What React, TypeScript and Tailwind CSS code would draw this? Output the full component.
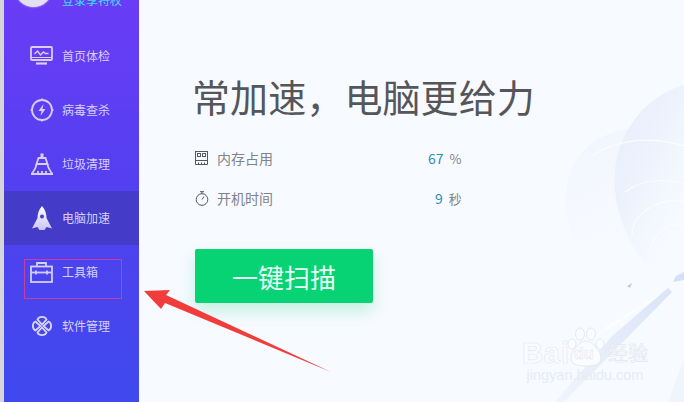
const font = "font-['Noto_Sans_CJK_SC','Noto_Sans',sans-serif]";

function MonitorIcon() {
  return (
    <svg width="23" height="19" viewBox="0 0 23 19" fill="none" stroke="#d9cdfb" strokeWidth="1.8">
      <rect x="1" y="1" width="21" height="13" rx="1" />
      <path d="M4.500 8l3-3 3 4 3-3 2 1.500h3" strokeWidth="1.400" />
      <path d="M1 11.500h21" strokeWidth="1" />
      <path d="M6 17.500h11" strokeWidth="2.200" />
    </svg>
  );
}

function ShieldIcon() {
  return (
    <svg width="24" height="24" viewBox="0 0 24 24" fill="none" stroke="#d9cdfb" strokeWidth="1.800">
      <circle cx="12" cy="12" r="10" />
      <path d="M12 0.500v2.500M12 21v2.500M0.500 12H3M21 12h2.500" strokeWidth="1.600" />
      <path d="M13.500 6l-5 7h3l-1 5 5-7h-3z" fill="#d9cdfb" stroke="none" />
    </svg>
  );
}

function BroomIcon() {
  return (
    <svg width="22" height="22" viewBox="0 0 22 22" fill="none" stroke="#d9cdfb" strokeWidth="1.800">
      <path d="M9.500 0.500h3v4h-3z" fill="#d9cdfb" stroke="none" />
      <path d="M7.500 5h7l2 6h-11z" />
      <path d="M5.500 11C5 15 3 18 0.500 21h21C19 18 17 15 16.500 11" />
      <path d="M7 21v-3M11 21v-3M15 21v-3" />
    </svg>
  );
}

function RocketIcon() {
  return (
    <svg width="22" height="25" viewBox="0 0 22 25">
      <defs>
        <linearGradient id="rk" x1="0" y1="0" x2="0" y2="1">
          <stop offset="0" stopColor="#ffffff" />
          <stop offset="1" stopColor="#c9c5f7" />
        </linearGradient>
      </defs>
      <path
        d="M11 0C7.500 4 6.500 8 6.500 12L1 22.500l5.500-1.500 2 3h5l2-3 5.500 1.500L15.500 12C15.500 8 14.500 4 11 0z"
        fill="url(#rk)"
      />
      <circle cx="11" cy="10.500" r="2" fill="#4a3fc9" />
    </svg>
  );
}

function ToolboxIcon() {
  return (
    <svg width="23" height="21" viewBox="0 0 23 21" fill="none" stroke="#d3cffa" strokeWidth="1.800">
      <rect x="1" y="4.500" width="21" height="15.500" />
      <path d="M7 4.500V1h9v3.500" />
      <path d="M1 10.500h21" />
      <path d="M6 8.500v4M17 8.500v4" strokeWidth="1.800" />
    </svg>
  );
}

function AppsIcon() {
  return (
    <svg width="22" height="22" viewBox="0 0 22 22" fill="none" stroke="#d9d7fb" strokeWidth="1.800">
      <path d="M11 9.500L6.500 4.500C8 1 14 1 15.500 4.500z" />
      <path d="M11 12.500L6.500 17.500C8 21 14 21 15.500 17.500z" />
      <path d="M9.500 11L4.500 6.500C1 8 1 14 4.500 15.500z" />
      <path d="M12.500 11L17.500 6.500C21 8 21 14 17.500 15.500z" />
    </svg>
  );
}

function ChipIcon() {
  return (
    <svg width="13" height="14" viewBox="0 0 13 14" fill="none" stroke="#55585e" strokeWidth="1">
      <rect x="0.500" y="0.500" width="12" height="9" />
      <rect x="2.500" y="2.500" width="3" height="3" />
      <rect x="7.500" y="2.500" width="3" height="3" />
      <path d="M0.500 9.500v4h12v-4M3.500 13.500v-2M6.500 13.500v-2M9.500 13.500v-2" />
    </svg>
  );
}

function TimerIcon() {
  return (
    <svg width="14" height="15" viewBox="0 0 14 15" fill="none" stroke="#55585e" strokeWidth="1">
      <circle cx="7" cy="8.500" r="5.800" />
      <path d="M5 0.700h4M7 0.700v2M7 8.500l2-3" />
    </svg>
  );
}

const navItems = [
  { label: "首页体检", icon: <MonitorIcon />, h: "h-[55px]" },
  { label: "病毒查杀", icon: <ShieldIcon />, h: "h-[54px]" },
  { label: "垃圾清理", icon: <BroomIcon />, h: "h-[54px]" },
  { label: "电脑加速", icon: <RocketIcon />, h: "h-[54px]", active: true },
  { label: "工具箱", icon: <ToolboxIcon />, h: "h-[54px]" },
  { label: "软件管理", icon: <AppsIcon />, h: "h-[54px]" },
];

function Sidebar() {
  return (
    <aside className="flex h-full w-[135px] shrink-0 flex-col bg-gradient-to-b from-[#6a3cf6] via-[#5140ef] to-[#3e49ee]">
      <div className="flex h-[28px] overflow-hidden">
        <div className="ml-[11px] mt-[-30px] h-[37px] w-[37px] rounded-full bg-[#e4e0f4] shadow-[0_0_2px_#ffffff]" />
        <span className="ml-[10px] mt-[-8px] text-[12px] leading-[16px] text-[#35e0f5]">登录享特权</span>
      </div>
      {navItems.map((item) => (
        <div key={item.label} className={`flex items-center ${item.h} ${item.active ? "bg-[#443bc8]" : ""}`}>
          <div className="flex w-[58px] shrink-0 justify-center pl-[17px]">{item.icon}</div>
          <span className="text-[12px] leading-none text-[#d6d0fa]">{item.label}</span>
        </div>
      ))}
    </aside>
  );
}

function Backdrop() {
  return (
    <svg className="absolute inset-0" width="545" height="402" viewBox="139 0 545 402" fill="none">
      <defs>
        <linearGradient id="orb" x1="0" y1="0.100" x2="0.700" y2="1">
          <stop offset="0" stopColor="#e6edfb" />
          <stop offset="0.500" stopColor="#eef3fd" />
          <stop offset="1" stopColor="#f7faff" stopOpacity="0" />
        </linearGradient>
        <linearGradient id="halo" x1="0" y1="0" x2="0.300" y2="1">
          <stop offset="0" stopColor="#f0f4fd" />
          <stop offset="1" stopColor="#f7faff" stopOpacity="0" />
        </linearGradient>
        <linearGradient id="streak" x1="1" y1="0" x2="0" y2="1">
          <stop offset="0" stopColor="#dae4f8" />
          <stop offset="1" stopColor="#f0f4fc" />
        </linearGradient>
      </defs>
      <path d="M684 129C640 122 590 128 572 168C558 205 568 245 600 280L684 300Z" fill="url(#halo)" />
      <path d="M684 85C650 95 620 125 615 170C612 205 625 240 650 270L684 285Z" fill="url(#orb)" />
      <path d="M592 156C620 138 650 136 684 146" stroke="#fbfcff" strokeWidth="1.200" />
      <path d="M625 192C640 180 660 178 684 183" stroke="#fbfcff" strokeWidth="1.200" />
      <path d="M632 235C632 212 660 198 684 201" stroke="#fbfcff" strokeWidth="1.200" />
      <path d="M650 250C654 232 670 222 684 225" stroke="#fbfcff" strokeWidth="1.200" />
      <path d="M668 290L612 322L530 385L600 335Z" fill="#fcfdff" />
      <path d="M668 288L612 336L555 402H564L620 345L672 292Z" fill="url(#streak)" />
      <path d="M684 272L676 276L673 282L684 280Z" fill="#d5dff5" />
      <path d="M632 283L627 286L630 288Z" fill="#c3c9dc" />
      <path d="M684 360L668 402H684Z" fill="#f0f4fc" />
    </svg>
  );
}

function Watermark() {
  return (
    <div className="absolute left-[381px] top-[327px] flex w-[130px] flex-col items-center whitespace-nowrap">
      <div className="flex items-end">
        <span className="font-['Liberation_Sans',sans-serif] text-[29px] font-bold leading-[28px] tracking-[1px] text-[#fbfcff] [-webkit-text-stroke:0.600px_#e6e9ef]">
          Bai
        </span>
        <div className="relative ml-[-3px] h-[40px] w-[38px]">
          <svg width="38" height="40" viewBox="0 0 38 40" fill="#fbfcff" stroke="#e6e9ef" strokeWidth="1">
            <ellipse cx="13" cy="7" rx="4.500" ry="6" />
            <ellipse cx="24" cy="7" rx="4.500" ry="6" />
            <ellipse cx="5" cy="17" rx="4" ry="5" />
            <ellipse cx="33" cy="17" rx="4" ry="5" />
            <path d="M19 14c-6 0-15 10-15 17 0 6 5 8 15 8s15-2 15-8c0-7-9-17-15-17z" />
          </svg>
          <span className="absolute bottom-[3px] left-[7px] font-['Liberation_Sans',sans-serif] text-[16px] font-bold leading-[20px] text-[#fbfcff] [-webkit-text-stroke:0.500px_#e2e5ec]">
            du
          </span>
        </div>
        <span className={`${font} ml-[3px] text-[20px] leading-[28px] text-[#fbfcff] [-webkit-text-stroke:0.600px_#e3e6ed]`}>经验</span>
      </div>
      <span className="font-['Liberation_Sans',sans-serif] text-[14.500px] leading-[17px] text-[#e8ebf1]">
        jingyan.baidu.com
      </span>
    </div>
  );
}

function Stat({ icon, label, value, unit, valueClass }: { icon: React.ReactNode; label: string; value: string; unit: string; valueClass: string }) {
  return (
    <div className="flex h-[20px] items-center">
      <div className="flex w-[22px] shrink-0">{icon}</div>
      <span className="text-[14px] leading-none text-[#808388]">{label}</span>
      <span className={`${valueClass} text-[14px] leading-none text-[#2a8fb5]`}>{value}</span>
      <span className="ml-[6px] text-[13px] leading-none text-[#808388]">{unit}</span>
    </div>
  );
}

export default function App() {
  return (
    <div className={`relative flex h-[402px] w-[684px] overflow-hidden bg-[#f7faff] ${font}`}>
      <div className="h-full w-[4px] shrink-0 bg-[#d6d6d8]" />
      <Sidebar />
      <main className="relative flex-1">
        <Backdrop />
        <Watermark />
        <div className="relative flex flex-col pl-[56px] pt-[72px]">
          <h1 className="ml-[-3px] text-[38px] font-normal leading-[48px] tracking-[0.100px] text-[#54565a]">常加速，电脑更给力</h1>
          <div className="mt-[28px] flex w-[270px] flex-col gap-[20px]">
            <Stat icon={<ChipIcon />} label="内存占用" value="67" unit="%" valueClass="ml-[155px]" />
            <Stat icon={<TimerIcon />} label="开机时间" value="9" unit="秒" valueClass="ml-[162px]" />
          </div>
          <button className="mt-[41px] flex h-[54px] w-[178px] items-center justify-center rounded-[2px] bg-[#07d374] text-[26px] font-normal text-[#e8fff4] shadow-[0_8px_16px_rgba(7,211,116,0.220)]">
            一键扫描
          </button>
        </div>
      </main>
      <div className="absolute left-[24px] top-[259px] h-[40px] w-[98px] border border-[#c43fa4]" />
      <svg className="absolute inset-0" width="684" height="402" viewBox="0 0 684 402">
        <polygon points="144,291 170,290 166,295 331,372 165,303 161,309" fill="#f23c3c" />
      </svg>
    </div>
  );
}
